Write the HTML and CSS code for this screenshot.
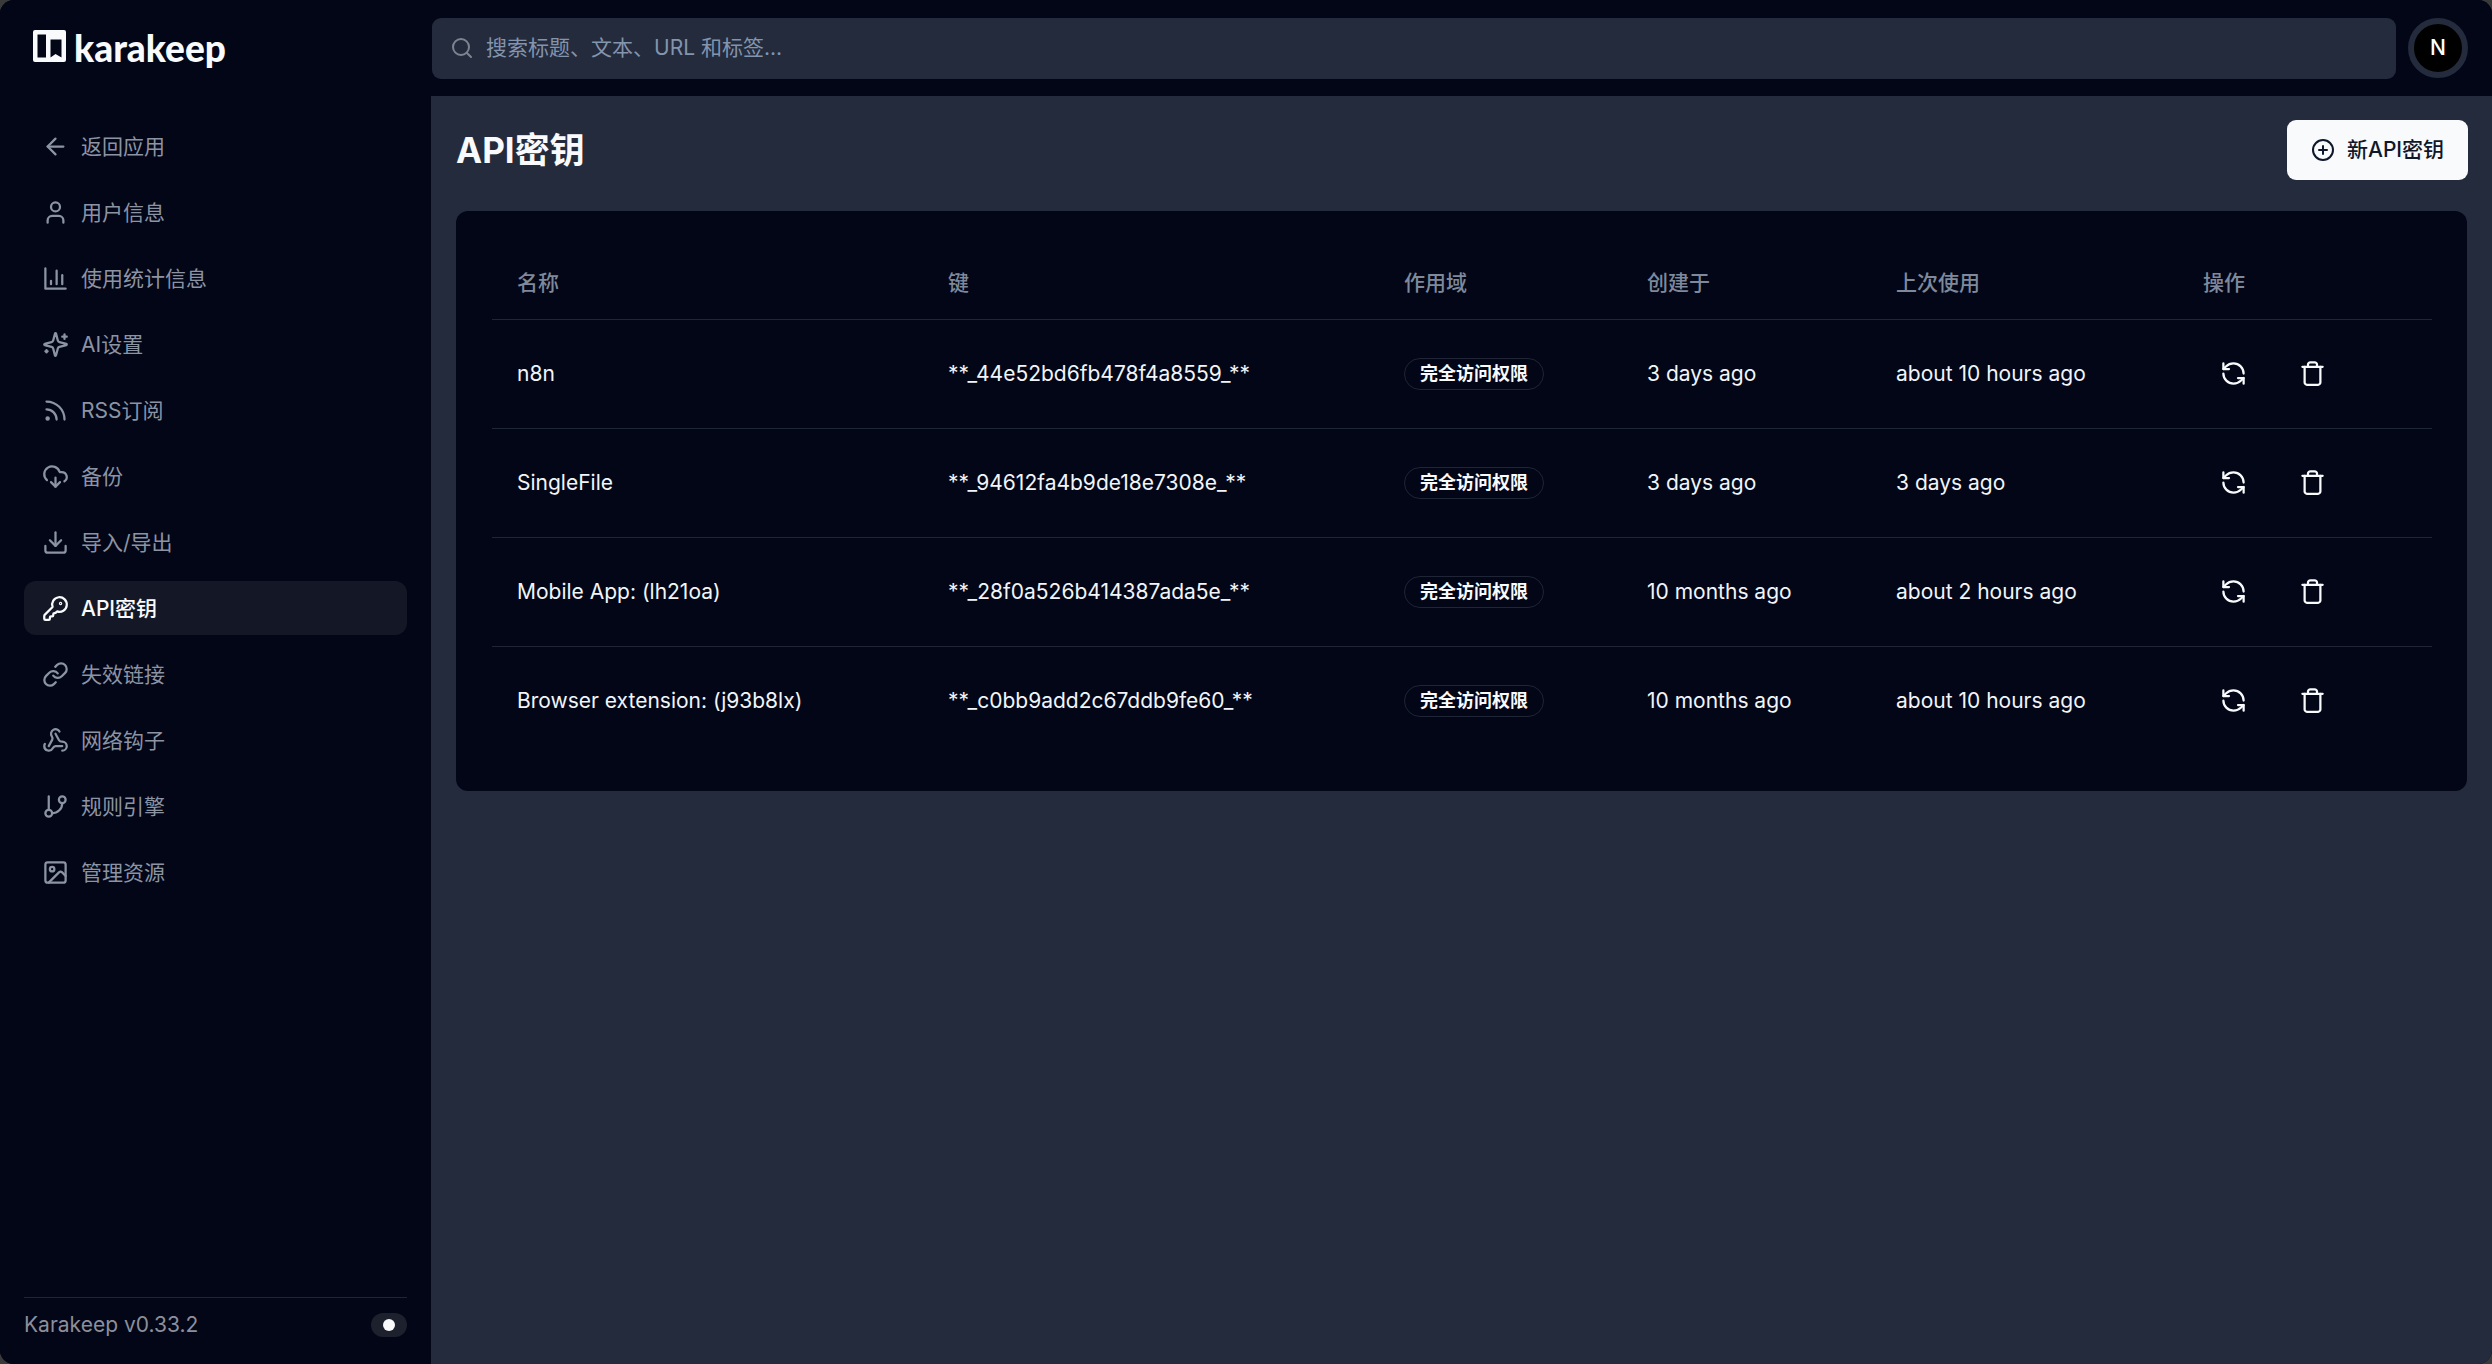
FILE: index.html
```html
<!DOCTYPE html>
<html lang="zh-CN">
<head>
    <meta charset="UTF-8">
    <meta name="viewport" content="width=device-width, initial-scale=1.0">
    <title>API密钥 - Karakeep</title>
    <link rel="stylesheet" href="styles.css">
</head>
<body>
<svg class="defs" width="0" height="0">
    <symbol id="i-refresh" viewBox="0 0 24 24"><path d="M21 12a9 9 0 0 0-9-9 9.75 9.75 0 0 0-6.74 2.74L3 8"/><path d="M3 3v5h5"/><path d="M3 12a9 9 0 0 0 9 9 9.75 9.75 0 0 0 6.74-2.74L21 16"/><path d="M16 16h5v5"/></symbol>
    <symbol id="i-trash" viewBox="0 0 24 24"><path d="M3 6h18"/><path d="M19 6v14c0 1-1 2-2 2H7c-1 0-2-1-2-2V6"/><path d="M8 6V4c0-1 1-2 2-2h4c1 0 2 1 2 2v2"/></symbol>
</svg>
<div class="app">
    <aside class="sidebar">
        <div class="logo">
            <svg class="logo-mark" viewBox="0 0 33 32"><path fill-rule="evenodd" d="M2 0h29a2 2 0 0 1 2 2v28a2 2 0 0 1-2 2H2a2 2 0 0 1-2-2V2a2 2 0 0 1 2-2zM4.500 4.500v23h8.500v-23zM17.500 9.500v18l5-3.500 6 3.500v-18z"/></svg>
            <span class="logo-text">karakeep</span>
        </div>
        <nav class="nav">
            <a class="nav-item"><svg class="icon" viewBox="0 0 24 24"><path d="m12 19-7-7 7-7"/><path d="M19 12H5"/></svg>返回应用</a>
            <a class="nav-item"><svg class="icon" viewBox="0 0 24 24"><path d="M19 21v-2a4 4 0 0 0-4-4H9a4 4 0 0 0-4 4v2"/><circle cx="12" cy="7" r="4"/></svg>用户信息</a>
            <a class="nav-item"><svg class="icon" viewBox="0 0 24 24"><path d="M3 3v18h18"/><path d="M18 17V9"/><path d="M13 17V5"/><path d="M8 17v-3"/></svg>使用统计信息</a>
            <a class="nav-item"><svg class="icon" viewBox="0 0 24 24"><path d="M9.937 15.500A2 2 0 0 0 8.500 14.063l-6.135-1.582a.5.5 0 0 1 0-.962L8.500 9.936A2 2 0 0 0 9.937 8.500l1.582-6.135a.5.5 0 0 1 .963 0L14.063 8.500A2 2 0 0 0 15.500 9.937l6.135 1.581a.5.5 0 0 1 0 .964L15.500 14.063a2 2 0 0 0-1.437 1.437l-1.582 6.135a.5.5 0 0 1-.963 0z"/><path d="M20 3v4"/><path d="M22 5h-4"/><path d="M4 17v2"/><path d="M5 18H3"/></svg>AI设置</a>
            <a class="nav-item"><svg class="icon" viewBox="0 0 24 24"><path d="M4 11a9 9 0 0 1 9 9"/><path d="M4 4a16 16 0 0 1 16 16"/><circle cx="5" cy="19" r="1"/></svg>RSS订阅</a>
            <a class="nav-item"><svg class="icon" viewBox="0 0 24 24"><path d="M12 13v8"/><path d="M4.393 15.269A7 7 0 1 1 15.710 8h1.790a4.500 4.500 0 0 1 2.436 8.284"/><path d="m8 17 4 4 4-4"/></svg>备份</a>
            <a class="nav-item"><svg class="icon" viewBox="0 0 24 24"><path d="M21 15v4a2 2 0 0 1-2 2H5a2 2 0 0 1-2-2v-4"/><path d="m7 10 5 5 5-5"/><path d="M12 15V3"/></svg>导入/导出</a>
            <a class="nav-item active"><svg class="icon" viewBox="0 0 24 24"><path d="M2.586 17.414A2 2 0 0 0 2 18.828V21a1 1 0 0 0 1 1h3a1 1 0 0 0 1-1v-1a1 1 0 0 1 1-1h1a1 1 0 0 0 1-1v-1a1 1 0 0 1 1-1h.172a2 2 0 0 0 1.414-.586l.814-.814a6.500 6.500 0 1 0-4-4z"/><circle cx="16.500" cy="7.500" r=".5"/></svg>API密钥</a>
            <a class="nav-item"><svg class="icon" viewBox="0 0 24 24"><path d="M10 13a5 5 0 0 0 7.540.54l3-3a5 5 0 0 0-7.070-7.070l-1.720 1.710"/><path d="M14 11a5 5 0 0 0-7.540-.54l-3 3a5 5 0 0 0 7.070 7.070l1.710-1.710"/></svg>失效链接</a>
            <a class="nav-item"><svg class="icon" viewBox="0 0 24 24"><path d="M18 16.980h-5.990c-1.100 0-1.950.94-2.480 1.900A4 4 0 0 1 2 17c.01-.7.2-1.400.57-2"/><path d="m6 17 3.130-5.780c.53-.97.1-2.180-.5-3.100a4 4 0 1 1 6.890-4.060"/><path d="m12 6 3.130 5.730C15.660 12.700 16.900 13 18 13a4 4 0 0 1 0 8"/></svg>网络钩子</a>
            <a class="nav-item"><svg class="icon" viewBox="0 0 24 24"><path d="M6 3v12"/><circle cx="18" cy="6" r="3"/><circle cx="6" cy="18" r="3"/><path d="M18 9a9 9 0 0 1-9 9"/></svg>规则引擎</a>
            <a class="nav-item"><svg class="icon" viewBox="0 0 24 24"><rect x="3" y="3" width="18" height="18" rx="2"/><circle cx="9" cy="9" r="2"/><path d="m21 15-3.086-3.086a2 2 0 0 0-2.828 0L6 21"/></svg>管理资源</a>
        </nav>
        <div class="side-foot">
            <span>Karakeep v0.33.2</span>
            <span class="toggle"><span class="toggle-dot"></span></span>
        </div>
    </aside>
    <div class="right">
        <header class="topbar">
            <div class="search">
                <svg class="icon search-icon" viewBox="0 0 24 24"><circle cx="11" cy="11" r="8"/><path d="m21 21-4.300-4.300"/></svg>
                <span>搜索标题、文本、URL 和标签...</span>
            </div>
            <div class="avatar">N</div>
        </header>
        <main class="main">
            <div class="page-head">
                <h1>API密钥</h1>
                <button class="btn-new"><svg class="icon" viewBox="0 0 24 24"><circle cx="12" cy="12" r="10"/><path d="M8 12h8"/><path d="M12 8v8"/></svg>新API密钥</button>
            </div>
            <section class="card">
                <table class="keys">
                    <thead>
                        <tr>
                            <th class="col-name">名称</th>
                            <th class="col-key">键</th>
                            <th class="col-scope">作用域</th>
                            <th class="col-created">创建于</th>
                            <th class="col-used">上次使用</th>
                            <th class="col-actions">操作</th>
                        </tr>
                    </thead>
                    <tbody>
                        <tr>
                            <td>n8n</td>
                            <td>**_44e52bd6fb478f4a8559_**</td>
                            <td><span class="badge">完全访问权限</span></td>
                            <td>3 days ago</td>
                            <td>about 10 hours ago</td>
                            <td><div class="actions"><button class="icon-btn"><svg class="icon"><use href="#i-refresh"/></svg></button><button class="icon-btn"><svg class="icon"><use href="#i-trash"/></svg></button></div></td>
                        </tr>
                        <tr>
                            <td>SingleFile</td>
                            <td>**_94612fa4b9de18e7308e_**</td>
                            <td><span class="badge">完全访问权限</span></td>
                            <td>3 days ago</td>
                            <td>3 days ago</td>
                            <td><div class="actions"><button class="icon-btn"><svg class="icon"><use href="#i-refresh"/></svg></button><button class="icon-btn"><svg class="icon"><use href="#i-trash"/></svg></button></div></td>
                        </tr>
                        <tr>
                            <td>Mobile App: (lh21oa)</td>
                            <td>**_28f0a526b414387ada5e_**</td>
                            <td><span class="badge">完全访问权限</span></td>
                            <td>10 months ago</td>
                            <td>about 2 hours ago</td>
                            <td><div class="actions"><button class="icon-btn"><svg class="icon"><use href="#i-refresh"/></svg></button><button class="icon-btn"><svg class="icon"><use href="#i-trash"/></svg></button></div></td>
                        </tr>
                        <tr>
                            <td>Browser extension: (j93b8lx)</td>
                            <td>**_c0bb9add2c67ddb9fe60_**</td>
                            <td><span class="badge">完全访问权限</span></td>
                            <td>10 months ago</td>
                            <td>about 10 hours ago</td>
                            <td><div class="actions"><button class="icon-btn"><svg class="icon"><use href="#i-refresh"/></svg></button><button class="icon-btn"><svg class="icon"><use href="#i-trash"/></svg></button></div></td>
                        </tr>
                    </tbody>
                </table>
            </section>
        </main>
    </div>
</div>
</body>
</html>
```

FILE: styles.css
```css
*{
    box-sizing: border-box;
}
html,body{
    margin: 0;
    height: 100%;
}
body{
    background: #3a3a3a;
    color: #f1f5f9;
    font-family: Inter, "Noto Sans CJK SC", sans-serif;
    font-size: 21px;
    line-height: 30px;
    overflow: hidden;
}
.defs{
    position: absolute;
}
.icon{
    width: 27px;
    height: 27px;
    flex: none;
    fill: none;
    stroke: currentColor;
    stroke-width: 2;
    stroke-linecap: round;
    stroke-linejoin: round;
}
.app{
    display: grid;
    grid-template-columns: 431px 1fr;
    height: 100%;
    border-radius: 14px;
    overflow: hidden;
    background: #020617;
}

/* sidebar */
.sidebar{
    display: flex;
    flex-direction: column;
    background: #020617;
}
.logo{
    display: flex;
    align-items: center;
    gap: 8px;
    height: 96px;
    padding-left: 33px;
    padding-bottom: 3px;
    color: #f8fafc;
}
.logo-mark{
    width: 33px;
    height: 32px;
    fill: #f8fafc;
    margin-bottom: 1px;
}
.logo-text{
    font-family: Lato, sans-serif;
    font-weight: 900;
    font-size: 37px;
    line-height: 1;
    margin-top: 2px;
}
.nav{
    display: flex;
    flex-direction: column;
    gap: 12px;
    padding: 23px 24px 0;
    flex: 1;
}
.nav-item{
    display: flex;
    align-items: center;
    gap: 12px;
    height: 54px;
    padding-left: 18px;
    border-radius: 12px;
    color: #8c94a4;
    line-height: 1;
}
.nav-item.active{
    background: #141826;
    color: #f8fafc;
    font-weight: 500;
}
.side-foot{
    display: flex;
    align-items: center;
    justify-content: space-between;
    margin: 0 24px 13px;
    height: 54px;
    border-top: 1.500px solid #1f2535;
    color: #8c8f9b;
}
.toggle{
    display: flex;
    align-items: center;
    justify-content: center;
    width: 36px;
    height: 24px;
    border-radius: 12px;
    background: #1d212d;
}
.toggle-dot{
    width: 12px;
    height: 12px;
    border-radius: 50%;
    background: #f8fafc;
}

/* top bar */
.right{
    display: flex;
    flex-direction: column;
    min-width: 0;
}
.topbar{
    display: flex;
    align-items: flex-start;
    gap: 12px;
    height: 96px;
    padding: 18px 24px 0 1px;
    background: #020617;
}
.search{
    display: flex;
    align-items: center;
    gap: 12px;
    flex: 1;
    height: 61px;
    padding: 0 0 1px 18px;
    border-radius: 9px;
    background: #242b3c;
    color: #8394ad;
}
.search-icon{
    width: 24px;
    height: 24px;
    color: #7d8490;
}
.avatar{
    display: flex;
    align-items: center;
    justify-content: center;
    width: 60px;
    height: 60px;
    border: 6px solid #242b3c;
    border-radius: 50%;
    background: #000;
    color: #fff;
    font-weight: 500;
}

/* main */
.main{
    flex: 1;
    padding: 24px 24px 0 25px;
    background: #242b3c;
}
.page-head{
    display: flex;
    align-items: center;
    justify-content: space-between;
    height: 60px;
    margin-bottom: 31px;
}
.page-head h1{
    margin: 0;
    font-size: 35px;
    line-height: 48px;
    font-weight: 700;
    color: #f8fafc;
}
.btn-new{
    display: flex;
    align-items: center;
    gap: 12px;
    width: 181px;
    height: 60px;
    padding: 0 0 0 24px;
    border: 0;
    border-radius: 9px;
    background: #f8fafc;
    color: #0f172a;
    font: inherit;
    font-weight: 500;
}
.btn-new .icon{
    width: 24px;
    height: 24px;
}
.card{
    margin-right: 1px;
    padding: 36px;
    border-radius: 12px;
    background: #020617;
}
.keys{
    width: 100%;
    table-layout: fixed;
    border-collapse: collapse;
}
.keys th{
    height: 72px;
    padding: 0 24px;
    text-align: left;
    font-weight: 500;
    color: #7f899c;
    border-bottom: 1.500px solid #1f2535;
}
.keys td{
    height: 109px;
    padding: 0 24px;
    border-bottom: 1.500px solid #1f2535;
}
.keys tbody tr:last-child td{
    border-bottom: 0;
}
.keys th:first-child,
.keys td:first-child{
    padding-left: 25px;
}
.col-name{ width: 432px; }
.col-key{ width: 456px; }
.col-scope{ width: 243px; }
.col-created{ width: 249px; }
.col-used{ width: 307px; }
.col-actions{ width: 253px; }
.badge{
    display: inline-flex;
    align-items: center;
    height: 32px;
    padding: 0 15px;
    border: 1.500px solid #1f2535;
    border-radius: 16px;
    font-size: 18px;
    font-weight: 600;
    color: #f8fafc;
}
.keys td:last-child{
    padding: 0;
}
.actions{
    display: flex;
    gap: 19px;
    padding-left: 24px;
}
.icon-btn{
    display: flex;
    align-items: center;
    justify-content: center;
    width: 60px;
    height: 60px;
    padding: 0;
    border: 0;
    background: none;
    color: #f8fafc;
}
```
